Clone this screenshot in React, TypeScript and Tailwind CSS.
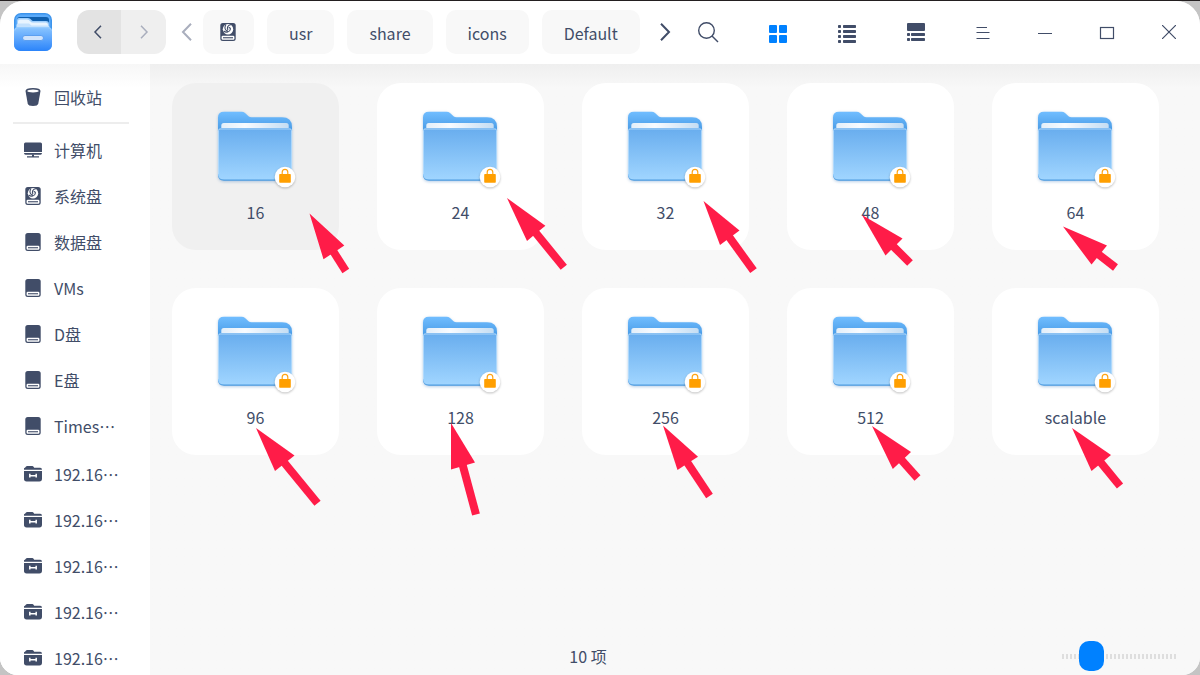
import type { ReactNode } from "react";

type Point = [number, number];

interface Pointer {
  tip: Point;
  right: Point;
  left: Point;
  tail: Point;
}

interface Folder {
  name: string;
  selected?: boolean;
  pointer: Pointer;
}

const folders: Folder[] = [
  { name: "16", selected: true, pointer: { tip: [137.5, 130.5], right: [172.3, 162.5], left: [151.5, 176.3], tail: [173.8, 188] } },
  { name: "24", pointer: { tip: [130, 115], right: [168.4, 142.7], left: [150, 158], tail: [186.8, 184.3] } },
  { name: "32", pointer: { tip: [121.5, 118], right: [157.5, 147.5], left: [138, 162], tail: [171.5, 187.7] } },
  { name: "48", pointer: { tip: [75, 132], right: [115.5, 155.5], left: [98.5, 172.5], tail: [123, 180] } },
  { name: "64", pointer: { tip: [71, 143.5], right: [115, 162.5], left: [99.5, 181.5], tail: [123.5, 184.5] } },
  { name: "96", pointer: { tip: [84, 140], right: [122.5, 167.5], left: [103, 183], tail: [145.5, 215.3] } },
  { name: "128", pointer: { tip: [74, 135], right: [98, 174.5], left: [74, 181.5], tail: [99, 226.5] } },
  { name: "256", pointer: { tip: [81, 137.5], right: [116, 168.7], left: [95.5, 182], tail: [127.5, 208] } },
  { name: "512", pointer: { tip: [85, 138], right: [124, 164], left: [105.8, 181], tail: [130.5, 190] } },
  { name: "scalable", pointer: { tip: [80, 140], right: [119, 167], left: [99.5, 183], tail: [128, 198] } },
];

function PointerArrow({ tip, right, left, tail }: Pointer) {
  const cx = (right[0] + left[0]) / 2;
  const cy = (right[1] + left[1]) / 2;
  const ix = cx + (tip[0] - cx) * 0.1;
  const iy = cy + (tip[1] - cy) * 0.1;
  return (
    <svg className="pointer-events-none absolute inset-0 size-full overflow-visible" aria-hidden="true">
      <line x1={ix} y1={iy} x2={tail[0]} y2={tail[1]} stroke="#ff1c48" strokeWidth="8" />
      <polygon points={`${tip} ${right} ${cx},${cy} ${left}`} fill="#ff1c48" />
    </svg>
  );
}

function FolderArt() {
  return (
    <svg width="79" height="80" viewBox="0 0 79 80" className="overflow-visible" aria-hidden="true">
      <g style={{ filter: "drop-shadow(0 1px 1.5px rgba(40,110,180,.35))" }}>
        <path d="M2 66V8.500Q2 2.700 8 2.700H25.500Q27.500 2.700 29 4L32.500 7.300Q33.700 8.300 35.500 8.300H66Q76 8.300 76 18V66Z" fill="url(#folderBack)" />
        <path d="M5.300 22V16.500Q5.300 14 7.800 14H70.200Q72.700 14 72.700 16.500V22Z" fill="url(#folderPaper)" />
        <path d="M2 21.500Q2 19.300 4 19.300H74Q76 19.300 76 21.500V66Q76 71.700 70 71.700H8Q2 71.700 2 66Z" fill="#4b9be0" />
        <path d="M2 21.500Q2 19.300 4 19.300H74Q76 19.300 76 21.500V65Q76 70.600 70 70.600H8Q2 70.600 2 65Z" fill="url(#folderFront)" />
        <path d="M2.500 65V21.500Q2.500 20 4 20H74Q75.500 20 75.500 21.500V65" fill="none" stroke="#b5dcfb" strokeOpacity=".85" />
      </g>
      <circle cx="69" cy="68" r="10.300" fill="#fff" style={{ filter: "drop-shadow(0 1px 1px rgba(0,0,0,.25))" }} />
      <path d="M66.200 66V63.300Q66.200 60.300 69 60.300Q71.800 60.300 71.800 63.300V66" fill="none" stroke="#ffa515" strokeWidth="1.200" />
      <rect x="63.200" y="65" width="11.600" height="8.800" rx=".8" fill="#ff9f00" />
    </svg>
  );
}

function TrashIcon() {
  return (
    <svg width="18" height="18" viewBox="0 0 18 18" aria-hidden="true">
      <path d="M1.500 3Q1.500 0 9 0T16.500 3L14.300 15.500Q13.800 18 9 18T3.700 15.500Z" fill="#414d68" />
      <ellipse cx="9" cy="3" rx="5.800" ry="1.500" fill="#fff" />
    </svg>
  );
}

function ComputerIcon() {
  return (
    <svg width="18" height="18" viewBox="0 0 18 18" fill="#414d68" aria-hidden="true">
      <path d="M0 11V3Q0 1.500 1.500 1.500H16.500Q18 1.500 18 3V11Z" />
      <path d="M0 12H18Q18 13.700 16.500 13.700H1.500Q0 13.700 0 12Z" />
      <path d="M8 13.500H10V15.200H15V16.500H3V15.200H8Z" />
    </svg>
  );
}

function DiskIcon({ system = false }: { system?: boolean }) {
  return (
    <svg width="18" height="18" viewBox="0 0 18 18" aria-hidden="true">
      <rect x="1.300" width="15.400" height="18" rx="2.500" fill="#414d68" />
      <rect x="2.600" y="12.700" width="12.800" height="4" rx="1.200" fill="#fff" />
      <rect x="4" y="14.200" width="10" height="1.100" fill="#414d68" />
      {system && (
        <g>
          <circle cx="9" cy="6.300" r="5.200" fill="#fff" />
          <path
            d="M6.800 2C5 4.600 6.200 7.600 8.800 8.200M11.800 1.800C8.600 2.200 7.600 5 9 7.200M4.600 8C7 10 11 9.400 11.400 6C11.500 4.600 10.200 4.200 9.800 5.200"
            fill="none"
            stroke="#414d68"
            strokeWidth="1.100"
          />
        </g>
      )}
    </svg>
  );
}

function NetworkFolderIcon() {
  return (
    <svg width="18" height="18" viewBox="0 0 18 18" aria-hidden="true">
      <path d="M0 4.800V3.500Q0 2.800 1 2.800L1.800 1.700Q2.300 1 3.200 1H8.200Q9.200 1 9.700 2L10.200 2.800H16.200Q18 2.800 18 4.800Z" fill="#414d68" />
      <path d="M0 5.900H18V13.800Q18 16.400 15.400 16.400H2.600Q0 16.400 0 13.800Z" fill="#414d68" />
      <path d="M5.800 8.800V12.500M12.200 8.800V12.500M5.800 10.700H12.200" stroke="#fff" strokeWidth="1.500" fill="none" />
    </svg>
  );
}

function AppLogo() {
  return (
    <svg width="38" height="38" viewBox="0 0 38 38" aria-hidden="true">
      <rect width="38" height="38" rx="7" fill="#3c94ec" />
      <rect x="1.500" y="1.500" width="35" height="16" rx="5" fill="#5aaafa" />
      <path d="M3 15V7Q3 4 6 4H32Q35 4 35 7V15Z" fill="#0f5fae" />
      <path d="M3 15V7Q3 5 5 5H14Q16 5 17 6.500T19.500 8H32Q35 8 35 11V15Z" fill="#9fcffc" />
      <path d="M4 15V8.500Q4 6.500 6 6.500H13Q15 6.500 16 8T19 9.500H32Q34 9.500 34 12V15Z" fill="#e8f4ff" />
      <path d="M2.500 16V12Q2.500 10.500 4.500 10.500H15L17.500 12.500H33.500Q35.500 12.500 35.500 14V16Z" fill="#c4e1fd" />
      <path d="M0 18Q0 14 4 14H34Q38 14 38 18V31Q38 38 31 38H7Q0 38 0 31Z" fill="url(#logoFront)" />
      <path d="M.7 17.500Q1 14.700 4 14.700H34Q37 14.700 37.300 17.500" fill="none" stroke="#9ccfff" />
      <rect x="8.500" y="22.500" width="21" height="5" rx="2.500" fill="#cfe3fc" stroke="#5c9ff0" />
    </svg>
  );
}

function Chevron({ direction, className, size = 14 }: { direction: "left" | "right"; className: string; size?: number }) {
  return (
    <svg width={size} height={size + 4} viewBox="0 0 14 18" fill="none" stroke="currentColor" strokeWidth="1.500" className={className} aria-hidden="true">
      <path d={direction === "left" ? "M10 2.800L4 9L10 15.200" : "M4 2.800L10 9L4 15.200"} />
    </svg>
  );
}

function GradientDefs() {
  return (
    <svg width="0" height="0" className="absolute" aria-hidden="true">
      <defs>
        <linearGradient id="folderBack" gradientUnits="userSpaceOnUse" x1="0" y1="3" x2="0" y2="24">
          <stop offset="0" stopColor="#70bdff" />
          <stop offset="1" stopColor="#4396e2" />
        </linearGradient>
        <linearGradient id="folderFront" x1="0" y1="0" x2="0" y2="1">
          <stop offset="0" stopColor="#68adee" />
          <stop offset="1" stopColor="#a0d5ff" />
        </linearGradient>
        <linearGradient id="folderPaper" x1="0" y1="0" x2="1" y2="0">
          <stop offset="0" stopColor="#e2eef9" />
          <stop offset=".35" stopColor="#f8fbff" />
          <stop offset="1" stopColor="#c4ddf3" />
        </linearGradient>
        <linearGradient id="logoFront" x1="0" y1="0" x2="0" y2="1">
          <stop offset="0" stopColor="#8cc6ff" />
          <stop offset="1" stopColor="#2b84fa" />
        </linearGradient>
      </defs>
    </svg>
  );
}

const localPlaces: { label: string; icon: ReactNode }[] = [
  { label: "计算机", icon: <ComputerIcon /> },
  { label: "系统盘", icon: <DiskIcon system /> },
  { label: "数据盘", icon: <DiskIcon /> },
  { label: "VMs", icon: <DiskIcon /> },
  { label: "D盘", icon: <DiskIcon /> },
  { label: "E盘", icon: <DiskIcon /> },
  { label: "Times⋯", icon: <DiskIcon /> },
];

const networkPlaces = ["192.16⋯", "192.16⋯", "192.16⋯", "192.16⋯", "192.16⋯"];

function Place({ label, icon }: { label: string; icon: ReactNode }) {
  return (
    <li>
      <a href="#" className="flex h-[46px] items-center gap-3 pl-6 whitespace-nowrap">
        {icon}
        {label}
      </a>
    </li>
  );
}

function ToolButton({ label, className, children }: { label: string; className: string; children: ReactNode }) {
  return (
    <button type="button" aria-label={label} className={`flex h-11 shrink-0 items-center justify-center ${className}`}>
      {children}
    </button>
  );
}

function Toolbar() {
  return (
    <header className="flex h-[63px] shrink-0 items-center bg-white pb-0.5 pl-[14px]">
      <AppLogo />
      <div className="ml-[25px] flex overflow-hidden rounded-xl">
        <ToolButton label="后退" className="w-11 bg-[#e3e3e3] pr-0.5">
          <Chevron direction="left" className="text-[#414d68]" />
        </ToolButton>
        <ToolButton label="前进" className="w-[45px] bg-[#efefef]">
          <Chevron direction="right" className="text-[#a9aebd]" />
        </ToolButton>
      </div>
      <ToolButton label="向左滚动路径" className="w-[37px] pl-1">
        <Chevron direction="left" size={20} className="text-[#a9aebd]" />
      </ToolButton>
      <nav aria-label="路径" className="flex gap-[13px]">
        <ToolButton label="系统盘" className="w-[51px] rounded-[10px] bg-[#f8f8f8] pr-0.5">
          <DiskIcon system />
        </ToolButton>
        {["usr", "share", "icons", "Default"].map((part) => (
          <a key={part} href="#" className="flex h-11 items-center rounded-[10px] bg-[#f8f8f8] px-[22px] pt-0.5">
            {part}
          </a>
        ))}
      </nav>
      <ToolButton label="向右滚动路径" className="w-12 pl-0.5">
        <Chevron direction="right" size={20} className="text-[#414d68]" />
      </ToolButton>
      <ToolButton label="搜索" className="w-10">
        <svg width="22" height="22" viewBox="0 0 22 22" fill="none" stroke="#414d68" strokeWidth="1.400" aria-hidden="true">
          <circle cx="9.500" cy="9.500" r="7.800" />
          <path d="M15 15L21 21" />
        </svg>
      </ToolButton>
      <div className="ml-auto flex pt-[3px]">
        <ToolButton label="图标视图" className="w-[69px] pt-px">
          <svg width="18" height="18" viewBox="0 0 18 18" fill="#0081ff" aria-hidden="true">
            <rect width="8" height="8" rx="1" />
            <rect x="10" width="8" height="8" rx="1" />
            <rect y="10" width="8" height="8" rx="1" />
            <rect x="10" y="10" width="8" height="8" rx="1" />
          </svg>
        </ToolButton>
        <ToolButton label="列表视图" className="w-[69px] pt-px">
          <svg width="18" height="18" viewBox="0 0 18 18" fill="#414d68" aria-hidden="true">
            {[0, 5, 10, 15].map((y) => (
              <g key={y}>
                <rect y={y} width="3" height="3" rx=".7" />
                <rect x="5" y={y} width="13" height="3" rx=".7" />
              </g>
            ))}
          </svg>
        </ToolButton>
        <ToolButton label="分组视图" className="mr-0.5 w-[69px] pb-0.5">
          <svg width="18" height="18" viewBox="0 0 18 18" fill="#414d68" aria-hidden="true">
            <rect width="18" height="8" rx="1" />
            {[10, 15].map((y) => (
              <g key={y}>
                <rect y={y} width="3" height="3" rx=".7" />
                <rect x="4" y={y} width="14" height="3" rx=".7" />
              </g>
            ))}
          </svg>
        </ToolButton>
        <ToolButton label="菜单" className="w-[62px]">
          <svg width="14" height="14" viewBox="0 0 14 14" stroke="#414d68" strokeWidth="1.200" aria-hidden="true">
            <path d="M.5 1.500H11M.5 6.500H13.500M.5 12.500H13.500" />
          </svg>
        </ToolButton>
        <ToolButton label="最小化" className="w-[62px]">
          <svg width="14" height="14" viewBox="0 0 14 14" stroke="#414d68" strokeWidth="1.200" aria-hidden="true">
            <path d="M0 7.500H14" />
          </svg>
        </ToolButton>
        <ToolButton label="最大化" className="w-[62px]">
          <svg width="16" height="14" viewBox="0 0 16 14" fill="none" stroke="#414d68" strokeWidth="1.200" aria-hidden="true">
            <rect x="1.500" y="1.500" width="13" height="11" />
          </svg>
        </ToolButton>
        <ToolButton label="关闭" className="w-[62px] pb-0.5">
          <svg width="14" height="14" viewBox="0 0 14 14" stroke="#414d68" strokeWidth="1.200" aria-hidden="true">
            <path d="M0 0L14 14M14 0L0 14" />
          </svg>
        </ToolButton>
      </div>
    </header>
  );
}

function Sidebar() {
  return (
    <nav aria-label="位置" className="w-[150px] shrink-0 overflow-hidden bg-white bg-linear-to-b from-[#f7f7f7] to-white to-[24px] pt-[10px]">
      <ul>
        <Place label="回收站" icon={<TrashIcon />} />
      </ul>
      <hr className="mt-0.5 mr-[21px] mb-[3px] ml-[13px] border-t-2 border-[#ededed]" />
      <ul>
        {localPlaces.map((place) => (
          <Place key={place.label} {...place} />
        ))}
      </ul>
      <ul className="mt-0.5">
        {networkPlaces.map((label, index) => (
          <Place key={index} label={label} icon={<NetworkFolderIcon />} />
        ))}
      </ul>
    </nav>
  );
}

export default function App() {
  return (
    <div
      lang="zh-CN"
      className="flex h-screen flex-col bg-[#c4c4c4] text-base text-[#414d68] [font-family:'Noto_Sans_CJK_SC',sans-serif]"
    >
      <GradientDefs />
      <div className="h-px shrink-0 bg-[#231f20]" />
      <div className="flex min-h-0 flex-1 flex-col overflow-hidden rounded-t-3xl rounded-b-[18px] bg-[#f8f8f8]">
        <Toolbar />
        <div className="flex min-h-0 flex-1">
          <Sidebar />
          <main className="flex min-w-0 flex-1 flex-col bg-linear-to-b from-[#efefef] to-[#f8f8f8] to-[24px]">
            <ul className="flex min-h-0 flex-1 flex-wrap content-start gap-[38px] pt-[19px] pl-[22px]">
              {folders.map(({ name, selected, pointer }) => (
                <li key={name} className="relative">
                  <button
                    type="button"
                    className={`flex w-[167px] flex-col items-center gap-[11px] rounded-3xl pt-[26px] pb-[26px] ${selected ? "bg-[#f0f0f0]" : "bg-white"}`}
                  >
                    <FolderArt />
                    <span className="leading-6">{name}</span>
                  </button>
                  <PointerArrow {...pointer} />
                </li>
              ))}
            </ul>
            <footer className="flex h-[38px] shrink-0 items-center">
              <p className="flex-1 text-center">10 项</p>
              <div className="flex pr-6 pl-9">
                <input
                  type="range"
                  aria-label="图标大小"
                  min="0"
                  max="100"
                  defaultValue="19"
                  className="h-[30px] w-[114px] appearance-none bg-[repeating-linear-gradient(to_right,#dedede_0_2px,transparent_2px_4px)] bg-[length:100%_5px] bg-center bg-no-repeat [&::-webkit-slider-thumb]:h-[30px] [&::-webkit-slider-thumb]:w-[25px] [&::-webkit-slider-thumb]:appearance-none [&::-webkit-slider-thumb]:rounded-[10px] [&::-webkit-slider-thumb]:bg-[#0081ff]"
                />
              </div>
            </footer>
          </main>
        </div>
      </div>
    </div>
  );
}
